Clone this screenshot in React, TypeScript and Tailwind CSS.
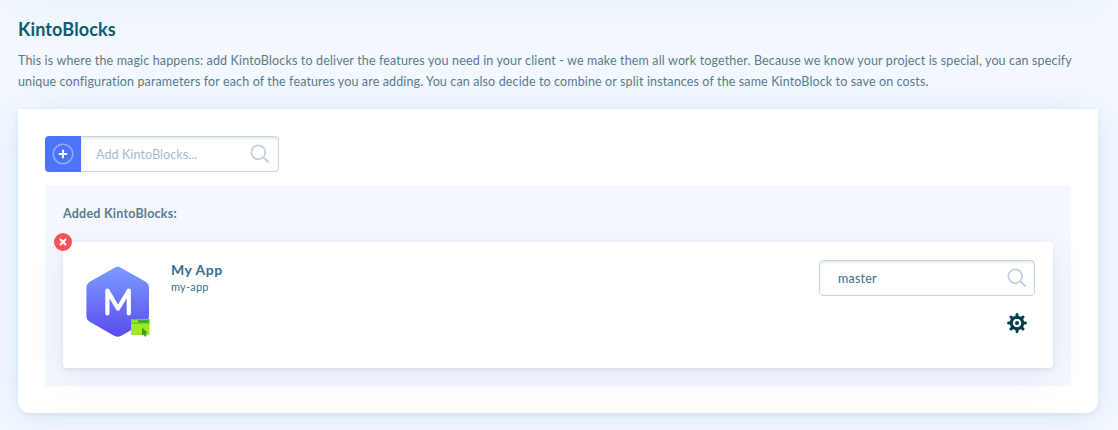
function SearchIcon() {
  return (
    <svg className="h-5 w-5 shrink-0" viewBox="0 0 20 20" fill="none" stroke="#c3d3e2" strokeWidth="1.9">
      <circle cx="8.3" cy="8.3" r="6.9" />
      <path d="M13.2 13.2 18.5 18.5" />
    </svg>
  );
}

function PlusIcon() {
  return (
    <svg className="h-[22px] w-[22px]" viewBox="0 0 22 22" fill="none">
      <circle cx="11" cy="11" r="9.8" stroke="#8fa9fb" strokeWidth="1.6" />
      <path d="M11 6.8v8.4M6.8 11h8.4" stroke="#fff" strokeWidth="2.1" />
    </svg>
  );
}

function GearIcon() {
  return (
    <svg className="h-5 w-5" viewBox="0 0 20 20" fill="none" stroke="#033d4b">
      <circle cx="10" cy="10" r="5.8" strokeWidth="3" />
      <circle cx="10" cy="10" r="2" fill="#033d4b" stroke="none" />
      <path
        d="M10 1.6v2.6M10 15.8v2.6M1.6 10h2.6M15.8 10h2.6M4 4l1.8 1.8M14.2 14.2l1.8 1.8M4 16l1.8-1.8M14.2 5.8l1.8-1.8"
        strokeWidth="3"
        strokeLinecap="round"
      />
    </svg>
  );
}

function AppLogo() {
  return (
    <svg className="h-[72px] w-[66px]" viewBox="0 0 66 72">
      <defs>
        <linearGradient id="hex" x1="0" y1="0" x2="0" y2="1">
          <stop offset="0" stopColor="#7a9dff" />
          <stop offset="1" stopColor="#5a4bef" />
        </linearGradient>
      </defs>
      <path
        d="M29.6 1.7Q32.7 0 35.8 1.7L60.3 15.4Q64 17.5 64 21.7V49.8Q64 54 60.3 56.1L35.8 70Q32.7 71.6 29.6 70L5.1 56.1Q1.4 54 1.4 49.8V21.7Q1.4 17.5 5.1 15.4Z"
        fill="url(#hex)"
      />
      <path d="M22.4 47.4V24.6L33 42.6 43.8 24.6V47.4" fill="none" stroke="#fff" strokeWidth="4.2" strokeLinecap="round" strokeLinejoin="round" />
      <path d="M46 53h18.5v16H46z" fill="#a0ea22" />
      <path d="M46 53h18.5v5H46z" fill="#64d32f" />
      <path d="M53 54.4h10.6v2H53z" fill="#369b34" />
      <circle cx="48.3" cy="55.4" r="1.1" fill="#c6f522" />
      <circle cx="51.2" cy="55.4" r="1.1" fill="#c6f522" />
      <path d="M57 61.5v8l1.6-1.3 1.5 2.6 1.6-.8-1.3-2.6 2.3-.3z" fill="#369b34" />
    </svg>
  );
}

export default function App() {
  return (
    <div className="h-[430px] overflow-hidden bg-[#f4f8ff] font-['Lato','Noto_Sans',sans-serif] text-[#587b8d]">
      <div className="mr-5 ml-[18px] h-0 shadow-[0_0_36px_6px_rgba(125,190,215,0.2)]" />
      <header className="h-[109px] px-[18px] pt-[17px]">
        <h1 className="text-[18px] leading-6 font-bold tracking-[0.14px] text-[#0b5d70]">KintoBlocks</h1>
        <p className="mt-[9px] text-[12.5px] leading-[21px] whitespace-nowrap">
          <span className="block tracking-[0.15px]">
            This is where the magic happens: add KintoBlocks to deliver the features you need in your client - we make them all work together. Because we know your project is special, you can specify
          </span>
          <span className="block tracking-[0.13px]">
            unique configuration parameters for each of the features you are adding. You can also decide to combine or split instances of the same KintoBlock to save on costs.
          </span>
        </p>
      </header>

      <main className="mr-5 ml-[18px] h-[304px] rounded-b-xl bg-white px-[27px] pt-[27px] shadow-[0_2px_5px_rgba(60,120,150,0.1),0_4px_36px_rgba(100,175,210,0.2)]">
        <div className="flex h-9 w-[234px] overflow-hidden rounded">
          <button className="flex w-9 items-center justify-center bg-[#4c74f8]" aria-label="Add">
            <PlusIcon />
          </button>
          <div className="flex flex-1 items-center justify-between rounded-r border border-l-0 border-[#c6d6d9] pr-[8px] pl-[15px] shadow-[inset_0_2px_2px_rgba(90,140,140,0.16)]">
            <span className="pt-[2px] text-[12.5px] tracking-[0.1px] text-[#9fbbd6]">Add KintoBlocks...</span>
            <SearchIcon />
          </div>
        </div>

        <section className="mt-[13px] h-[201px] bg-[#f4f8ff] px-[18px] pt-[19px]">
          <h2 className="h-[38px] text-[12.5px] leading-5 font-bold tracking-[0.24px]">Added KintoBlocks:</h2>
          <article className="relative flex h-[126px] justify-between rounded bg-white pt-[18px] pr-[18px] pl-[22px] shadow-[0_2px_4px_rgba(50,90,120,0.1),0_8px_36px_rgba(50,80,110,0.09)]">
            <button className="absolute -top-[9px] -left-[9px] flex h-[18px] w-[18px] items-center justify-center rounded-full bg-[#ff5157]" aria-label="Remove">
              <svg className="h-2 w-2" viewBox="0 0 8 8" stroke="#fff" strokeWidth="2.2">
                <path d="M1 1l6 6M7 1 1 7" />
              </svg>
            </button>
            <div className="flex">
              <div className="pt-[6px]">
                <AppLogo />
              </div>
              <div className="ml-5 text-[#35718f]">
                <h3 className="text-[14px] leading-5 font-bold tracking-[0.5px]">My App</h3>
                <p className="text-[11px] leading-[14px] tracking-[0.2px]">my-app</p>
              </div>
            </div>
            <div className="flex w-[216px] flex-col items-end">
              <div className="flex h-9 w-full items-center justify-between rounded border border-[#c6d6d9] pr-[7px] pl-[18px] shadow-[inset_0_2px_2px_rgba(90,140,140,0.16)]">
                <span className="pt-[2px] text-[12.5px] tracking-[0.2px] text-[#35718f]">master</span>
                <SearchIcon />
              </div>
              <div className="mt-[17px] mr-2">
                <GearIcon />
              </div>
            </div>
          </article>
        </section>
      </main>
    </div>
  );
}
